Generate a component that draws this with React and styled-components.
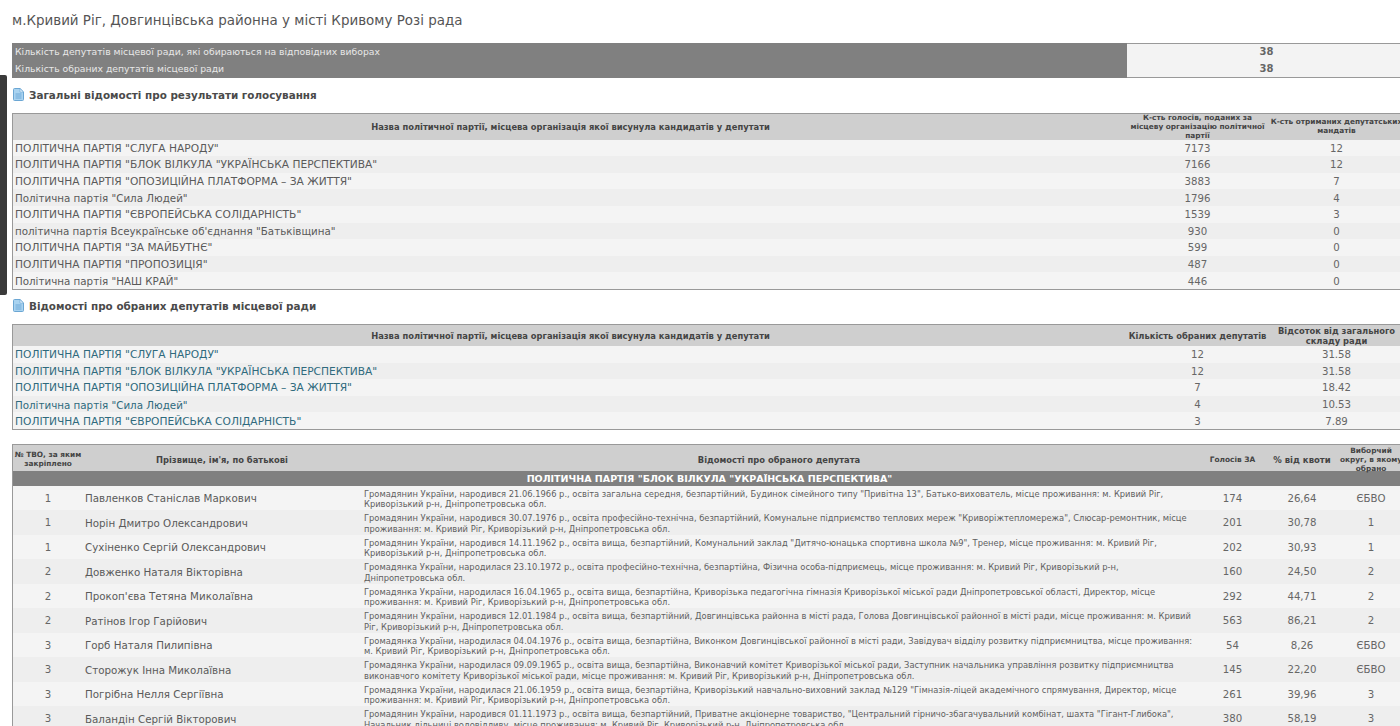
import React from 'react';
import styled, { createGlobalStyle } from 'styled-components';

const GlobalStyle = createGlobalStyle`
  html, body {
    margin: 0;
    height: 726px;
    overflow: hidden;
    background: #fff;
    font-family: "DejaVu Sans", Verdana, sans-serif;
    color: #555;
  }
`;

const Page = styled.div`
  width: 1394px;
  padding-left: 12px;
`;

const SideStrip = styled.div`
  position: absolute;
  left: 0;
  top: 75px;
  width: 7px;
  height: 220px;
  background: #3a3a3a;
  border-radius: 0 2px 2px 0;
`;

const Title = styled.h1`
  margin: 0;
  height: 43px;
  padding-top: 13px;
  box-sizing: border-box;
  font-size: 13.45px;
  line-height: 16px;
  font-weight: 400;
  color: #555;
`;

const SummaryBox = styled.div`
  display: grid;
  grid-template-columns: 1115px 1fr;
  height: 35px;
`;

const SummaryLabels = styled.div`
  background: #808080;
  color: #e8e8e8;
  font-size: 9.25px;
  padding: 1px 0 0 3px;
  line-height: 16.6px;
`;

const SummaryValues = styled.div`
  background: #f3f3f3;
  border-top: 1px solid #999;
  border-bottom: 1px solid #999;
  box-sizing: border-box;
  text-align: center;
  font-size: 10px;
  font-weight: 700;
  line-height: 16.6px;
  color: #666;
`;

const SectionHeading = styled.h2`
  display: flex;
  align-items: center;
  gap: 5px;
  margin: 0;
  padding: 0 0 2px 1px;
  box-sizing: border-box;
  height: ${(p) => p.$h}px;
  font-size: 10.4px;
  font-weight: 700;
  color: #4a4a4a;
  svg {
    flex: none;
  }
`;

const Table = styled.div`
  border: 1px solid #999;
  border-right: none;
  box-sizing: border-box;
  margin-bottom: ${(p) => p.$mb || 0}px;
`;

const Row = styled.div`
  display: grid;
  grid-template-columns: ${(p) => p.$cols};
  box-sizing: border-box;
  height: ${(p) => p.$h}px;
  padding-top: ${(p) => p.$pt || 0}px;
  align-items: center;
  background: ${(p) => (p.$odd ? '#eeeeee' : '#f4f4f4')};
`;

const HeadRow = styled(Row)`
  background: #cfcfcf;
`;

const HeadCell = styled.div`
  text-align: center;
  font-size: ${(p) => p.$size || 7.37}px;
  line-height: ${(p) => p.$lh || 8.8}px;
  font-weight: 700;
  color: #444;
  white-space: nowrap;
`;

const NameCell = styled.div`
  padding-left: 2px;
  font-size: ${(p) => (p.$caps ? 10.65 : 10.3)}px;
  white-space: nowrap;
  color: ${(p) => (p.$link ? '#2f6a7d' : '#5a5a5a')};
`;

const NumCell = styled.div`
  text-align: center;
  font-size: 10.2px;
  color: #666;
`;

const PartyBand = styled.div`
  height: 14.5px;
  background: #808080;
  color: #fff;
  text-align: center;
  font-size: 9.5px;
  line-height: 15px;
  font-weight: 700;
`;

const PersonName = styled.div`
  padding-left: 2px;
  font-size: 10.3px;
  white-space: nowrap;
  color: #5a5a5a;
`;

const Details = styled.div`
  padding: 2px 0 0 3px;
  font-size: 8.33px;
  line-height: 10.3px;
  color: #5f5f5f;
  span {
    display: block;
    white-space: nowrap;
  }
`;

const DocIcon = () => (
  <svg width="11" height="13" viewBox="0 0 11 13">
    <path d="M.5 1.5a1 1 0 0 1 1-1h5.6l3.4 3.4v7.6a1 1 0 0 1-1 1h-8a1 1 0 0 1-1-1z" fill="#a9d3f0" stroke="#6ba6d3" />
    <path d="M7 .6v3.5h3.4z" fill="#e6f3fc" stroke="#6ba6d3" strokeWidth=".6" />
    <path d="M2.5 6h6M2.5 8h6M2.5 10h6" stroke="#5d9ed0" strokeWidth=".8" />
  </svg>
);

const resultCols = '1115px 139px 1fr';
const deputyCols = '70px 278px 836px 71px 68px 1fr';

const results = [
  ['ПОЛІТИЧНА ПАРТІЯ "СЛУГА НАРОДУ"', '7173', '12'],
  ['ПОЛІТИЧНА ПАРТІЯ "БЛОК ВІЛКУЛА "УКРАЇНСЬКА ПЕРСПЕКТИВА"', '7166', '12'],
  ['ПОЛІТИЧНА ПАРТІЯ "ОПОЗИЦІЙНА ПЛАТФОРМА – ЗА ЖИТТЯ"', '3883', '7'],
  ['Політична партія "Сила Людей"', '1796', '4'],
  ['ПОЛІТИЧНА ПАРТІЯ "ЄВРОПЕЙСЬКА СОЛІДАРНІСТЬ"', '1539', '3'],
  ['політична партія Всеукраїнське об\'єднання "Батьківщина"', '930', '0'],
  ['ПОЛІТИЧНА ПАРТІЯ "ЗА МАЙБУТНЄ"', '599', '0'],
  ['ПОЛІТИЧНА ПАРТІЯ "ПРОПОЗИЦІЯ"', '487', '0'],
  ['Політична партія "НАШ КРАЙ"', '446', '0'],
];

const elected = [
  ['ПОЛІТИЧНА ПАРТІЯ "СЛУГА НАРОДУ"', '12', '31.58'],
  ['ПОЛІТИЧНА ПАРТІЯ "БЛОК ВІЛКУЛА "УКРАЇНСЬКА ПЕРСПЕКТИВА"', '12', '31.58'],
  ['ПОЛІТИЧНА ПАРТІЯ "ОПОЗИЦІЙНА ПЛАТФОРМА – ЗА ЖИТТЯ"', '7', '18.42'],
  ['Політична партія "Сила Людей"', '4', '10.53'],
  ['ПОЛІТИЧНА ПАРТІЯ "ЄВРОПЕЙСЬКА СОЛІДАРНІСТЬ"', '3', '7.89'],
];

const deputies = [
  ['1', 'Павленков Станіслав Маркович', 'Громадянин України, народився 21.06.1966 р., освіта загальна середня, безпартійний, Будинок сімейного типу "Привітна 13", Батько-вихователь, місце проживання: м. Кривий Ріг,', 'Криворізький р-н, Дніпропетровська обл.', '174', '26,64', 'ЄБВО'],
  ['1', 'Норін Дмитро Олександрович', 'Громадянин України, народився 30.07.1976 р., освіта професійно-технічна, безпартійний, Комунальне підприємство теплових мереж "Криворіжтепломережа", Слюсар-ремонтник, місце', 'проживання: м. Кривий Ріг, Криворізький р-н, Дніпропетровська обл.', '201', '30,78', '1'],
  ['1', 'Сухіненко Сергій Олександрович', 'Громадянин України, народився 14.11.1962 р., освіта вища, безпартійний, Комунальний заклад "Дитячо-юнацька спортивна школа №9", Тренер, місце проживання: м. Кривий Ріг,', 'Криворізький р-н, Дніпропетровська обл.', '202', '30,93', '1'],
  ['2', 'Довженко Наталя Вікторівна', 'Громадянка України, народилася 23.10.1972 р., освіта професійно-технічна, безпартійна, Фізична особа-підприємець, місце проживання: м. Кривий Ріг, Криворізький р-н,', 'Дніпропетровська обл.', '160', '24,50', '2'],
  ['2', 'Прокоп\'єва Тетяна Миколаївна', 'Громадянка України, народилася 16.04.1965 р., освіта вища, безпартійна, Криворізька педагогічна гімназія Криворізької міської ради Дніпропетровської області, Директор, місце', 'проживання: м. Кривий Ріг, Криворізький р-н, Дніпропетровська обл.', '292', '44,71', '2'],
  ['2', 'Ратінов Ігор Гарійович', 'Громадянин України, народився 12.01.1984 р., освіта вища, безпартійний, Довгинцівська районна в місті рада, Голова Довгинцівської районної в місті ради, місце проживання: м. Кривий', 'Ріг, Криворізький р-н, Дніпропетровська обл.', '563', '86,21', '2'],
  ['3', 'Горб Наталя Пилипівна', 'Громадянка України, народилася 04.04.1976 р., освіта вища, безпартійна, Виконком Довгинцівської районної в місті ради, Завідувач відділу розвитку підприємництва, місце проживання:', 'м. Кривий Ріг, Криворізький р-н, Дніпропетровська обл.', '54', '8,26', 'ЄБВО'],
  ['3', 'Сторожук Інна Миколаївна', 'Громадянка України, народилася 09.09.1965 р., освіта вища, безпартійна, Виконавчий комітет Криворізької міської ради, Заступник начальника управління розвитку підприємництва', 'виконавчого комітету Криворізької міської ради, місце проживання: м. Кривий Ріг, Криворізький р-н, Дніпропетровська обл.', '145', '22,20', 'ЄБВО'],
  ['3', 'Погрібна Нелля Сергіївна', 'Громадянка України, народилася 21.06.1959 р., освіта вища, безпартійна, Криворізький навчально-виховний заклад №129 "Гімназія-ліцей академічного спрямування, Директор, місце', 'проживання: м. Кривий Ріг, Криворізький р-н, Дніпропетровська обл.', '261', '39,96', '3'],
  ['3', 'Баландін Сергій Вікторович', 'Громадянин України, народився 01.11.1973 р., освіта вища, безпартійний, Приватне акціонерне товариство, "Центральний гірничо-збагачувальний комбінат, шахта "Гігант-Глибока",', 'Начальник дільниці водовідливу, місце проживання: м. Кривий Ріг, Криворізький р-н, Дніпропетровська обл.', '380', '58,19', '3'],
];

const isCaps = (name) => name.startsWith('ПОЛІТИЧНА');

const App = () => (
  <Page>
    <GlobalStyle />
    <SideStrip />
    <Title>м.Кривий Ріг, Довгинцівська районна у місті Кривому Розі рада</Title>

    <SummaryBox>
      <SummaryLabels>
        Кількість депутатів місцевої ради, які обираються на відповідних виборах
        <br />
        Кількість обраних депутатів місцевої ради
      </SummaryLabels>
      <SummaryValues>
        38
        <br />
        38
      </SummaryValues>
    </SummaryBox>

    <SectionHeading $h={35}>
      <DocIcon />
      Загальні відомості про результати голосування
    </SectionHeading>
    <Table>
      <HeadRow $cols={resultCols} $h={25.6}>
        <HeadCell $size={8.35}>Назва політичної партії, місцева організація якої висунула кандидатів у депутати</HeadCell>
        <HeadCell>К-сть голосів, поданих за<br />місцеву організацію політичної<br />партії</HeadCell>
        <HeadCell>К-сть отриманих депутатських<br />мандатів</HeadCell>
      </HeadRow>
      {results.map(([name, votes, seats], i) => (
        <Row key={name} $cols={resultCols} $h={16.6} $pt={1} $odd={i % 2 === 1}>
          <NameCell $caps={isCaps(name)}>{name}</NameCell>
          <NumCell>{votes}</NumCell>
          <NumCell>{seats}</NumCell>
        </Row>
      ))}
    </Table>

    <SectionHeading $h={34}>
      <DocIcon />
      Відомості про обраних депутатів місцевої ради
    </SectionHeading>
    <Table $mb={14}>
      <HeadRow $cols={resultCols} $h={21} $pt={1}>
        <HeadCell $size={8.35}>Назва політичної партії, місцева організація якої висунула кандидатів у депутати</HeadCell>
        <HeadCell $size={8.35}>Кількість обраних депутатів</HeadCell>
        <HeadCell $size={8.35} $lh={10}>Відсоток від загального<br />складу ради</HeadCell>
      </HeadRow>
      {elected.map(([name, count, share], i) => (
        <Row key={name} $cols={resultCols} $h={16.6} $pt={1} $odd={i % 2 === 1}>
          <NameCell $link $caps={isCaps(name)}>{name}</NameCell>
          <NumCell>{count}</NumCell>
          <NumCell>{share}</NumCell>
        </Row>
      ))}
    </Table>

    <Table>
      <HeadRow $cols={deputyCols} $h={26.5} $pt={2}>
        <HeadCell>№ ТВО, за яким<br />закріплено</HeadCell>
        <HeadCell $size={8.35}>Прізвище, ім'я, по батькові</HeadCell>
        <HeadCell $size={8.35}>Відомості про обраного депутата</HeadCell>
        <HeadCell $size={7.4}>Голосів ЗА</HeadCell>
        <HeadCell $size={8.5}>% від квоти</HeadCell>
        <HeadCell>Виборчий<br />округ, в якому<br />обрано</HeadCell>
      </HeadRow>
      <PartyBand>ПОЛІТИЧНА ПАРТІЯ "БЛОК ВІЛКУЛА "УКРАЇНСЬКА ПЕРСПЕКТИВА"</PartyBand>
      {deputies.map(([tvo, name, line1, line2, votes, quota, district], i) => (
        <Row key={name} $cols={deputyCols} $h={24.5} $odd={i % 2 === 1}>
          <NumCell>{tvo}</NumCell>
          <PersonName>{name}</PersonName>
          <Details>
            <span>{line1}</span>
            <span>{line2}</span>
          </Details>
          <NumCell>{votes}</NumCell>
          <NumCell>{quota}</NumCell>
          <NumCell>{district}</NumCell>
        </Row>
      ))}
    </Table>
  </Page>
);

export default App;
